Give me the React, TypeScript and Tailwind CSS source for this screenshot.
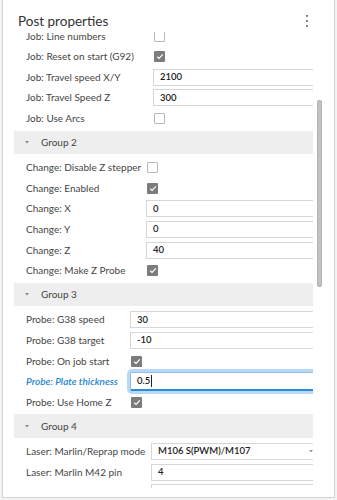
import React from "react";

type Item =
  | { kind: "check"; label: string; checked: boolean }
  | { kind: "input"; label: string; value: string; focused?: boolean }
  | { kind: "select"; label: string; value: string };

type Group = { title?: string; labelCls: string; items: Item[] };

const groups: Group[] = [
  {
    labelCls: "w-[139px]",
    items: [
      { kind: "check", label: "Job: Line numbers", checked: false },
      { kind: "check", label: "Job: Reset on start (G92)", checked: true },
      { kind: "input", label: "Job: Travel speed X/Y", value: "2100" },
      { kind: "input", label: "Job: Travel Speed Z", value: "300" },
      { kind: "check", label: "Job: Use Arcs", checked: false },
    ],
  },
  {
    title: "Group 2",
    labelCls: "w-[132px]",
    items: [
      { kind: "check", label: "Change: Disable Z stepper", checked: false },
      { kind: "check", label: "Change: Enabled", checked: true },
      { kind: "input", label: "Change: X", value: "0" },
      { kind: "input", label: "Change: Y", value: "0" },
      { kind: "input", label: "Change: Z", value: "40" },
      { kind: "check", label: "Change: Make Z Probe", checked: true },
    ],
  },
  {
    title: "Group 3",
    labelCls: "w-[116px]",
    items: [
      { kind: "input", label: "Probe: G38 speed", value: "30" },
      { kind: "input", label: "Probe: G38 target", value: "-10" },
      { kind: "check", label: "Probe: On job start", checked: true },
      { kind: "input", label: "Probe: Plate thickness", value: "0.5", focused: true },
      { kind: "check", label: "Probe: Use Home Z", checked: true },
    ],
  },
  {
    title: "Group 4",
    labelCls: "w-[137px]",
    items: [
      { kind: "select", label: "Laser: Marlin/Reprap mode", value: "M106 S(PWM)/M107" },
      { kind: "input", label: "Laser: Marlin M42 pin", value: "4" },
      { kind: "input", label: "", value: "" },
    ],
  },
];

function Checkbox({ checked }: { checked: boolean }) {
  if (checked) {
    return (
      <div className="shrink-0 ml-[1px] w-[11px] h-[11px] rounded-[1px] bg-[#7c7c7c] flex items-center justify-center">
        <svg width="8" height="7" viewBox="0 0 8 7">
          <path d="M1.2 3.7 L3.1 5.4 L6.8 1.4" fill="none" stroke="#fff" strokeWidth="1.2" />
        </svg>
      </div>
    );
  }
  return <div className="shrink-0 ml-[1px] w-[11px] h-[11px] rounded-[1px] border border-[#b8b8b8] bg-white" />;
}

function Field({ item }: { item: Item }) {
  if (item.kind === "check") return <Checkbox checked={item.checked} />;
  if (item.kind === "select") {
    return (
      <div className="shrink-0 w-[230px] h-[17px] border border-[#d6d6d6] bg-white flex items-center pl-[6px] text-[9.5px] font-semibold text-[#222]">
        <span className="w-[151px]">{item.value}</span>
        <svg width="4" height="3" viewBox="0 0 4 3">
          <path d="M0 0h4L2 2.5z" fill="#9a9a9a" />
        </svg>
      </div>
    );
  }
  if (item.focused) {
    return (
      <div className="shrink-0 w-[230px] h-[19px] rounded-[2px] border border-[#8fbfea] border-b-2 border-b-[#2a8bd6] bg-white shadow-[0_0_0_3px_#b8d8f5] flex items-center pl-[6px] text-[9.5px] font-semibold text-[#222]">
        <span>{item.value}</span>
        <span className="ml-px w-px h-[12px] bg-[#222]" />
      </div>
    );
  }
  return (
    <div className="shrink-0 w-[230px] h-[17px] border border-[#d6d6d6] bg-white flex items-center pl-[6px] text-[9.5px] font-semibold text-[#222]">
      {item.value}
    </div>
  );
}

function Row({ item, labelCls }: { item: Item; labelCls: string }) {
  const active = item.kind === "input" && item.focused;
  return (
    <div className="h-[20.67px] flex items-center">
      <div
        className={
          labelCls +
          " shrink-0 pl-[12px] text-[10px] whitespace-nowrap " +
          (active ? "text-[#1a86d4] italic font-semibold" : "text-[#454545]")
        }
      >
        {item.label}
      </div>
      <Field item={item} />
    </div>
  );
}

function GroupHeader({ title }: { title: string }) {
  return (
    <div className="mt-[1.67px] mb-[3.33px] h-[23.33px] bg-[#eeeeee] flex items-center">
      <svg className="ml-[11px]" width="4" height="3" viewBox="0 0 4 3">
        <path d="M0 0h4L2 2.5z" fill="#8a8a8a" />
      </svg>
      <span className="ml-[12px] text-[10px] text-[#454545]">{title}</span>
    </div>
  );
}

export default function App() {
  return (
    <div className="w-[337px] h-[500px] bg-[#f3f3f3] overflow-hidden font-['Lato',sans-serif]">
      <div className="ml-[2px] w-[333px] h-[498px] bg-white border-x border-b border-[#d3d3d3] flex flex-col">
        <div className="h-[32px] shrink-0 flex items-start">
          <div className="mt-[10px] ml-[15px] text-[13.5px] leading-[22px] text-[#333]">Post properties</div>
          <svg className="ml-auto mr-[25px] mt-[14px]" width="4" height="14" viewBox="0 0 4 14">
            <rect x="1" y="1" width="1.8" height="1.8" fill="#6a6a6a" />
            <rect x="1" y="6" width="1.8" height="1.8" fill="#6a6a6a" />
            <rect x="1" y="11" width="1.8" height="1.8" fill="#6a6a6a" />
          </svg>
        </div>
        <div className="flex">
          <div className="ml-[11px] w-[299px] h-[456px] overflow-hidden">
            <div className="mt-[-6.33px]">
              {groups.map((g, i) => (
                <div key={i}>
                  {g.title && <GroupHeader title={g.title} />}
                  {g.items.map((it, j) => (
                    <Row key={j} item={it} labelCls={g.labelCls} />
                  ))}
                </div>
              ))}
            </div>
          </div>
          <div className="ml-[4px] pt-[68px]">
            <div className="w-[5px] h-[187px] rounded-[2px] bg-[#c2c2c2] border border-[#b2b2b2]" />
          </div>
        </div>
      </div>
    </div>
  );
}
